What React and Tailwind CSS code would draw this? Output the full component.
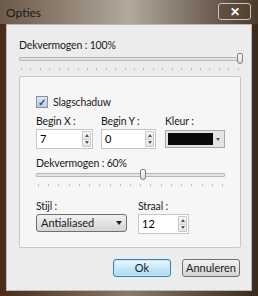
const font = { fontFamily: 'Lato, "Open Sans", "Noto Sans", sans-serif' };

const label = 'text-[10.5px] tracking-[-0.15px] text-[#1a1a1a] leading-[16px]';

function Spinner() {
  return (
    <div className="flex flex-col w-[9px] h-full border border-[#c8c8c8] rounded-[1px] bg-[#f4f4f4]">
      <div className="flex-1 flex items-center justify-center border-b border-[#d0d0d0] bg-gradient-to-b from-[#fafafa] to-[#e4e4e4]">
        <span className="w-0 h-0 border-x-[2px] border-x-transparent border-b-[3px] border-b-[#555]" />
      </div>
      <div className="flex-1 flex items-center justify-center bg-gradient-to-b from-[#fafafa] to-[#e4e4e4]">
        <span className="w-0 h-0 border-x-[2px] border-x-transparent border-t-[3px] border-t-[#555]" />
      </div>
    </div>
  );
}

function NumberBox({ value, width }) {
  return (
    <div className={`flex h-[20px] ${width} border border-[#c4c6cc] bg-white`}>
      <span className="flex-1 pl-[3px] text-[11px] leading-[18px] text-black">{value}</span>
      <div className="p-[1px] h-full"><Spinner /></div>
    </div>
  );
}

function Slider({ pos, ticks }) {
  return (
    <div className="flex flex-col">
      <div className="relative h-[12px] flex items-center">
        <div className="w-full h-[4px] border border-[#b8b8b8] bg-[#e2e2e2] rounded-[1px]" />
        <div
          className="absolute top-0 w-[6px] h-[11px] border border-[#808080] rounded-[2px] rounded-b-[3px] bg-gradient-to-b from-white to-[#d8d8d8]"
          style={{ left: pos }}
        />
      </div>
      <div className="flex justify-between px-[2px] mt-[3px]">
        {Array.from({ length: ticks }).map((_, i) => (
          <span key={i} className="w-[1px] h-[2px] bg-[#bcbcbc]" />
        ))}
      </div>
    </div>
  );
}

export default function App() {
  return (
    <div
      className="w-[258px] h-[296px] flex flex-col bg-gradient-to-r from-[#4a2a18] via-[#8a7a6a] to-[#3a2a1c] overflow-hidden"
      style={font}
    >
      <div className="h-[24px] flex items-start justify-between bg-gradient-to-r from-[#6c5a4a] via-[#b2aa9c] to-[#4a3a2c]">
        <span className="ml-[6px] mt-[4px] text-[12px] text-[#1a1a1a]">Opties</span>
        <div className="mr-[7px] mt-[3px] w-[33px] h-[17px] flex items-center justify-center border border-[#cfc4b8] rounded-[3px] bg-[#5a4636]/40">
          <span className="text-white text-[12px] font-bold leading-none">✕</span>
        </div>
      </div>
      <div className="flex-1 ml-[6px] mr-[6px] mb-[5px] bg-[#ececec] border border-[#b8b8b8] flex flex-col pl-[12px] pr-[10px] pt-[12px]">
        <span className={label}>Dekvermogen : 100%</span>
        <Slider pos="218px" ticks={24} />

        <div className="mt-[6px] border border-[#c8c8c8] bg-[#f6f6f6] rounded-[2px] pl-[16px] pr-[15px] pt-[17px] pb-[13px] flex flex-col">
          <div className="flex items-center gap-[5px]">
            <div className="w-[12px] h-[12px] border border-[#8e8f8f] bg-gradient-to-b from-[#dfe9f5] to-[#b9cde6] flex items-center justify-center">
              <span className="text-[10px] leading-none text-[#2c4f8a] font-bold">✓</span>
            </div>
            <span className={label}>Slagschaduw</span>
          </div>

          <div className="flex mt-[3px]">
            <div className="flex flex-col w-[66px]">
              <span className={label}>Begin X :</span>
              <NumberBox value="7" width="w-[57px]" />
            </div>
            <div className="flex flex-col w-[65px]">
              <span className={label}>Begin Y :</span>
              <NumberBox value="0" width="w-[55px]" />
            </div>
            <div className="flex flex-col">
              <span className={label}>Kleur :</span>
              <div className="flex h-[18px] w-[60px] border border-[#a8a8a8] bg-[#e4e4e4] p-[2px] mt-[1px]">
                <div className="w-[45px] bg-[#0a0a0a]" />
                <div className="flex-1 flex items-center justify-center">
                  <span className="w-0 h-0 border-x-[2px] border-x-transparent border-t-[3px] border-t-[#555]" />
                </div>
              </div>
            </div>
          </div>

          <span className={`mt-[6px] ${label}`}>Dekvermogen : 60%</span>
          <div className="-mt-[2px]">
            <Slider pos="104px" ticks={19} />
          </div>

          <div className="flex mt-[12px]">
            <div className="flex flex-col w-[102px]">
              <span className={label}>Stijl :</span>
              <div className="flex items-center justify-between h-[18px] w-[91px] border border-[#707070] rounded-[3px] bg-gradient-to-b from-[#f2f2f2] to-[#d4d4d4] px-[4px]">
                <span className="text-[11px] text-[#1a1a1a]">Antialiased</span>
                <span className="w-0 h-0 border-x-[3px] border-x-transparent border-t-[4px] border-t-[#222]" />
              </div>
            </div>
            <div className="flex flex-col">
              <span className={label}>Straal :</span>
              <NumberBox value="12" width="w-[51px]" />
            </div>
          </div>
        </div>

        <div className="flex justify-end gap-[11px] mt-[11px] mr-[1px]">
          <div className="w-[58px] h-[18px] flex items-center justify-center border border-[#3c7fb1] rounded-[3px] bg-gradient-to-b from-[#eaf6fd] to-[#a7d9f5] shadow-[inset_0_0_0_1px_#c0e4f8]">
            <span className="text-[11px] text-[#1a1a1a]">Ok</span>
          </div>
          <div className="w-[58px] h-[18px] flex items-center justify-center border border-[#707070] rounded-[3px] bg-gradient-to-b from-[#f2f2f2] to-[#d4d4d4]">
            <span className="text-[11px] text-[#1a1a1a]">Annuleren</span>
          </div>
        </div>
      </div>
    </div>
  );
}
